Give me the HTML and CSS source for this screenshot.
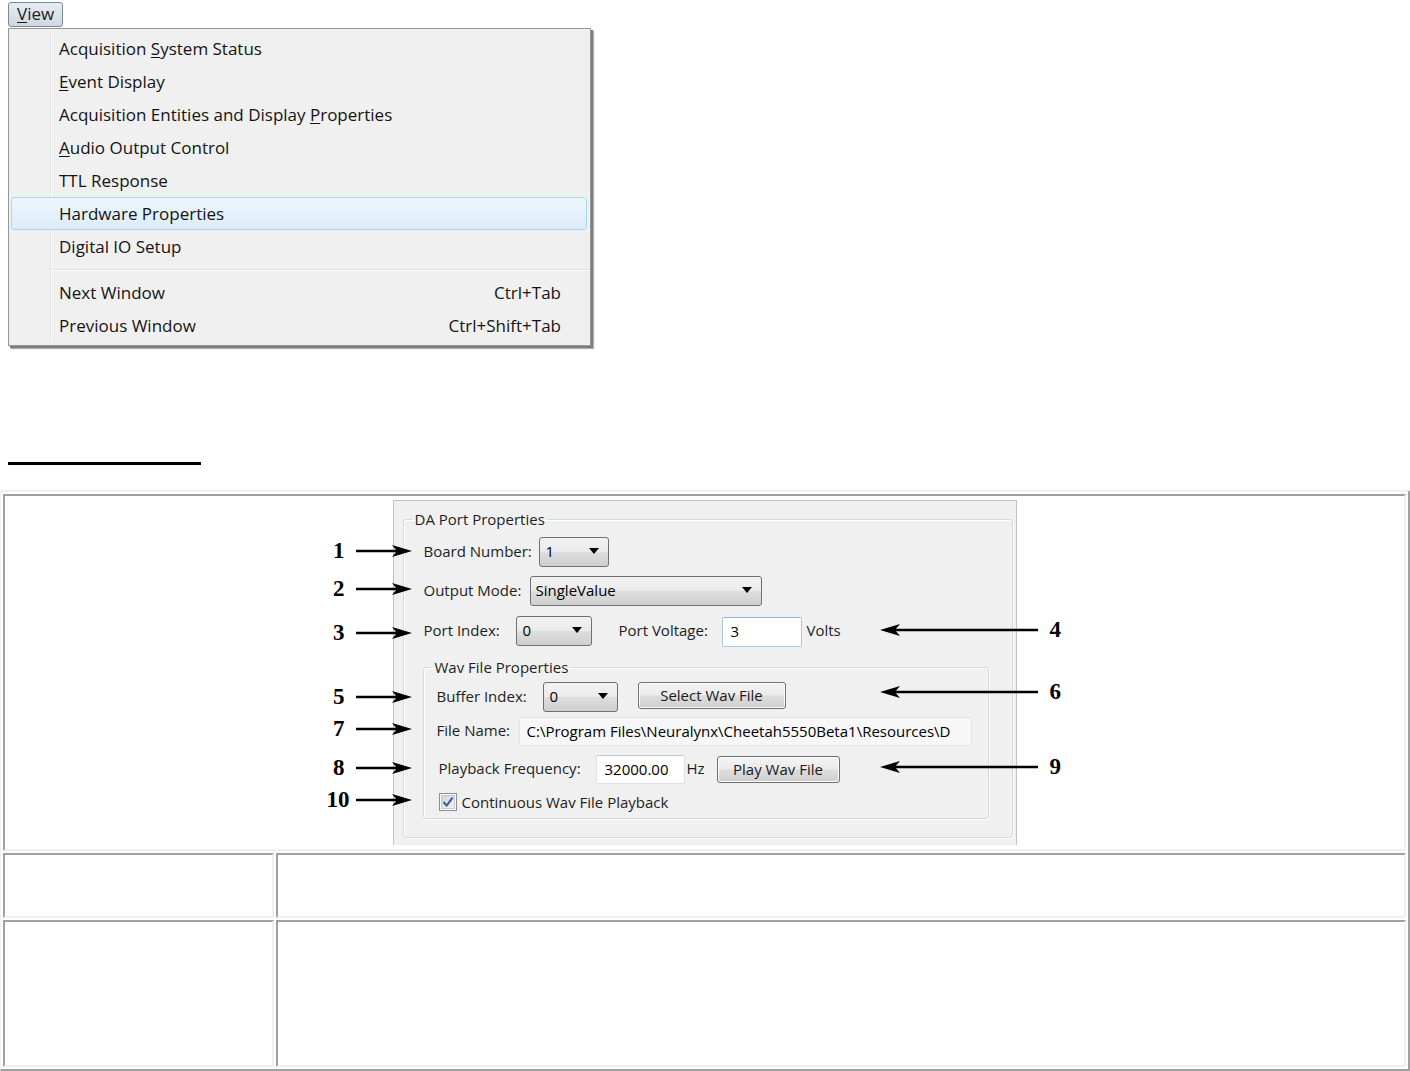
FILE: index.html
```html
<!DOCTYPE html>
<html>
<head>
<meta charset="utf-8">
<title>View menu and DA Port Properties</title>
<link rel="stylesheet" href="styles.css">
</head>
<body>
<div class="menu-area">
  <div class="menubar"><span class="view-btn"><u>V</u>iew</span></div>
  <div class="menu">
    <div class="item"><span>Acquisition <u>S</u>ystem Status</span></div>
    <div class="item"><span><u>E</u>vent Display</span></div>
    <div class="item"><span>Acquisition Entities and Display <u>P</u>roperties</span></div>
    <div class="item"><span><u>A</u>udio Output Control</span></div>
    <div class="item"><span>TTL Response</span></div>
    <div class="item active"><span>Hardware Properties</span></div>
    <div class="item"><span>Digital IO Setup</span></div>
    <div class="sep"></div>
    <div class="item"><span>Next Window</span><span class="key">Ctrl+Tab</span></div>
    <div class="item"><span>Previous Window</span><span class="key">Ctrl+Shift+Tab</span></div>
  </div>
</div>

<div class="rule"></div>

<table class="doc">
  <colgroup>
    <col class="col-a">
    <col class="col-b">
  </colgroup>
  <tr>
    <td class="fig-cell" colspan="2">
      <div class="dialog">
        <fieldset class="group da">
          <legend>DA Port Properties</legend>
          <div class="row r1">
            <span class="lbl w-board">Board Number:</span>
            <span class="combo cb-board">1</span>
          </div>
          <div class="row r2">
            <span class="lbl w-mode">Output Mode:</span>
            <span class="combo cb-mode">SingleValue</span>
          </div>
          <div class="row r3">
            <span class="lbl w-port">Port Index:</span>
            <span class="combo cb-port">0</span>
            <span class="lbl w-volt">Port Voltage:</span>
            <span class="text tb-volt">3</span>
            <span class="lbl unit-volts">Volts</span>
          </div>
          <fieldset class="group wav">
            <legend>Wav File Properties</legend>
            <div class="row w1">
              <span class="lbl w-buf">Buffer Index:</span>
              <span class="combo cb-buf">0</span>
              <span class="btn btn-select">Select Wav File</span>
            </div>
            <div class="row w2">
              <span class="lbl w-file">File Name:</span>
              <span class="text tb-file">C:\Program Files\Neuralynx\Cheetah5550Beta1\Resources\D</span>
            </div>
            <div class="row w3">
              <span class="lbl w-freq">Playback Frequency:</span>
              <span class="text tb-freq">32000.00</span>
              <span class="lbl unit-hz">Hz</span>
              <span class="btn btn-play">Play Wav File</span>
            </div>
            <div class="row w4">
              <svg class="check" width="18" height="18" viewBox="0 0 18 18">
                <defs>
                  <linearGradient id="cbg" x1="0" y1="0" x2="1" y2="1">
                    <stop offset="0" stop-color="#cbd3de"/>
                    <stop offset="1" stop-color="#f4f6f9"/>
                  </linearGradient>
                </defs>
                <rect x="0.5" y="0.5" width="17" height="17" fill="#fff" stroke="#8e8f8f"/>
                <rect x="2.5" y="2.5" width="13" height="13" fill="url(#cbg)" stroke="#c4cad3"/>
                <path d="M4.5 9 L7.6 12.6 L13.6 4.6" fill="none" stroke="#4a5d96" stroke-width="2.2" stroke-linejoin="round"/>
              </svg>
              <span class="lbl">Continuous Wav File Playback</span>
            </div>
          </fieldset>
        </fieldset>

        <div class="callout left c1"><span class="num">1</span><svg width="56" height="14" viewBox="0 0 56 14"><line x1="0" y1="7" x2="44" y2="7" stroke="#000" stroke-width="2.4"/><polygon points="56,7 36,1 41,7 36,13" fill="#000"/></svg></div>
        <div class="callout left c2"><span class="num">2</span><svg width="56" height="14" viewBox="0 0 56 14"><line x1="0" y1="7" x2="44" y2="7" stroke="#000" stroke-width="2.4"/><polygon points="56,7 36,1 41,7 36,13" fill="#000"/></svg></div>
        <div class="callout left c3"><span class="num">3</span><svg width="56" height="14" viewBox="0 0 56 14"><line x1="0" y1="7" x2="44" y2="7" stroke="#000" stroke-width="2.4"/><polygon points="56,7 36,1 41,7 36,13" fill="#000"/></svg></div>
        <div class="callout left c5"><span class="num">5</span><svg width="56" height="14" viewBox="0 0 56 14"><line x1="0" y1="7" x2="44" y2="7" stroke="#000" stroke-width="2.4"/><polygon points="56,7 36,1 41,7 36,13" fill="#000"/></svg></div>
        <div class="callout left c7"><span class="num">7</span><svg width="56" height="14" viewBox="0 0 56 14"><line x1="0" y1="7" x2="44" y2="7" stroke="#000" stroke-width="2.4"/><polygon points="56,7 36,1 41,7 36,13" fill="#000"/></svg></div>
        <div class="callout left c8"><span class="num">8</span><svg width="56" height="14" viewBox="0 0 56 14"><line x1="0" y1="7" x2="44" y2="7" stroke="#000" stroke-width="2.4"/><polygon points="56,7 36,1 41,7 36,13" fill="#000"/></svg></div>
        <div class="callout left c10"><span class="num">10</span><svg width="56" height="14" viewBox="0 0 56 14"><line x1="0" y1="7" x2="44" y2="7" stroke="#000" stroke-width="2.4"/><polygon points="56,7 36,1 41,7 36,13" fill="#000"/></svg></div>

        <div class="callout right c4"><svg width="158" height="14" viewBox="0 0 158 14"><polygon points="0,7 20,1 15,7 20,13" fill="#000"/><line x1="12" y1="7" x2="158" y2="7" stroke="#000" stroke-width="2.4"/></svg><span class="num">4</span></div>
        <div class="callout right c6"><svg width="158" height="14" viewBox="0 0 158 14"><polygon points="0,7 20,1 15,7 20,13" fill="#000"/><line x1="12" y1="7" x2="158" y2="7" stroke="#000" stroke-width="2.4"/></svg><span class="num">6</span></div>
        <div class="callout right c9"><svg width="158" height="14" viewBox="0 0 158 14"><polygon points="0,7 20,1 15,7 20,13" fill="#000"/><line x1="12" y1="7" x2="158" y2="7" stroke="#000" stroke-width="2.4"/></svg><span class="num">9</span></div>
      </div>
    </td>
  </tr>
  <tr>
    <td><div class="blank short"></div></td>
    <td><div class="blank short"></div></td>
  </tr>
  <tr>
    <td><div class="blank tall"></div></td>
    <td><div class="blank tall"></div></td>
  </tr>
</table>
</body>
</html>
```

FILE: styles.css
```css
html, body {
  margin: 0;
  padding: 0;
  background: #ffffff;
}

body {
  font-family: "Open Sans", "Noto Sans", sans-serif;
  color: #000;
  width: 1410px;
  overflow: hidden;
}

/* ---------- Menu ---------- */
.menu-area {
  padding: 2px 0 0 8px;
}

.menubar {
  height: 26px;
}

.view-btn {
  display: inline-block;
  box-sizing: border-box;
  width: 55px;
  height: 25px;
  padding-left: 8px;
  border: 1px solid #7b8898;
  border-radius: 3px;
  background: linear-gradient(#e8edf3, #cfd7e1);
  font-size: 17px;
  line-height: 22px;
  color: #1b1b1b;
}

.view-btn u {
  text-decoration-thickness: 1px;
  text-underline-offset: 2px;
}

.menu {
  box-sizing: border-box;
  width: 583px;
  height: 318px;
  padding: 3px 3px 3px 2px;
  border: 1px solid #979797;
  background:
    linear-gradient(to right, transparent 41px, #e2e3e3 41px, #e2e3e3 42px, #ffffff 42px, #ffffff 43px, transparent 43px) no-repeat 0 2px / 100% calc(100% - 4px),
    #f0f0f0;
  box-shadow: 2px 2px 0 #7c7c7c, 3px 3px 1px #b4b4b4;
}

.item {
  box-sizing: border-box;
  height: 33px;
  display: flex;
  align-items: center;
  justify-content: space-between;
  padding: 0 25px 0 47px;
  border: 1px solid transparent;
  border-radius: 3px;
  font-size: 17px;
  color: #141414;
  white-space: nowrap;
}

.item u {
  text-decoration-thickness: 1px;
  text-underline-offset: 2px;
}

.item.active {
  border-color: #a9d6ee;
  background: linear-gradient(#eef6fc, #dbecf8);
}

.sep {
  height: 6px;
  margin: 0 -3px 6px 40px;
  border-bottom: 1px solid #e0e0e0;
  box-shadow: 0 1px 0 #ffffff;
}

/* ---------- Black rule ---------- */
.rule {
  width: 193px;
  height: 3px;
  margin: 116px 0 0 8px;
  background: #000;
}

/* ---------- Table ---------- */
.doc {
  box-sizing: border-box;
  width: 1410px;
  margin-top: 25px;
  table-layout: fixed;
  border-collapse: separate;
  border-spacing: 2px;
  border-style: solid;
  border-width: 2px 2px 2px 1px;
  border-color: #f0f0f0 #a0a0a0 #a0a0a0 #f0f0f0;
}

.col-a {
  width: 271px;
}

.doc td {
  padding: 0;
  border-style: solid;
  border-width: 2px;
  border-color: #a0a0a0 #f0f0f0 #f0f0f0 #a0a0a0;
  vertical-align: top;
}

.doc td.fig-cell {
  padding: 4px 0;
}

.blank.short {
  height: 61px;
}

.blank.tall {
  height: 143px;
}

/* ---------- Dialog ---------- */
.dialog {
  position: relative;
  box-sizing: border-box;
  width: 624px;
  height: 345px;
  margin: 0 auto;
  border: 1px solid #c3c3c3;
  border-bottom: none;
  background: #f0f0f0;
  font-size: 15px;
  color: #1e1e1e;
}

.group {
  margin: 0;
  padding: 0;
  border: 1px solid #d5d9dd;
  border-radius: 3px;
  box-shadow: inset 1px 1px 0 #ffffff, 1px 1px 0 #ffffff;
  min-inline-size: 0;
}

.group legend {
  padding: 0 3px 1px;
  margin-left: 8px;
  font-size: 15px;
  line-height: 18px;
  color: #1e1e1e;
}

.group.da {
  width: 610px;
  box-sizing: border-box;
  margin: 9px 0 0 9px;
}

.group.wav {
  width: 566px;
  box-sizing: border-box;
  margin: 12px 0 18px 19px;
  padding-bottom: 7px;
}

.row {
  display: flex;
  align-items: center;
  height: 30px;
  padding-left: 20px;
  white-space: nowrap;
}

.r1 { margin-top: 8px; }
.r2 { margin-top: 9px; }
.r3 { margin-top: 10px; }

.wav .row { padding-left: 13px; }
.w1 { margin-top: 5px; }
.w2 { margin-top: 5px; height: 29px; }
.w3 { margin-top: 9px; height: 29px; }
.wav .w3 { padding-left: 15px; }
.w4 { margin-top: 9px; height: 18px; }
.wav .w4 { padding-left: 15px; }

.lbl {
  display: inline-block;
  flex: none;
  padding-bottom: 3px;
}

.w4 .lbl { padding-bottom: 1px; }

.w-board { width: 115px; }
.w-mode  { width: 106px; }
.w-port  { width: 92px; }
.w-volt  { width: 103px; margin-left: 27px; }
.unit-volts { margin-left: 5px; }
.w-buf   { width: 106px; }
.w-file  { width: 82px; }
.w-freq  { width: 157px; }
.unit-hz { width: 32px; margin-left: 2px; }

.check { flex: none; margin-right: 5px; }

/* combo box */
.combo {
  box-sizing: border-box;
  display: flex;
  align-items: center;
  flex: none;
  height: 30px;
  padding: 0 0 2px 6px;
  border: 1px solid #707070;
  border-radius: 3px;
  background: linear-gradient(#f3f3f3 0%, #ebebeb 48%, #dddddd 52%, #cfcfcf 100%);
  color: #000;
}

.combo::after {
  content: "";
  margin-left: auto;
  margin-right: 9px;
  border-left: 5px solid transparent;
  border-right: 5px solid transparent;
  border-top: 6px solid #000;
}

.cb-board { width: 70px; }
.cb-mode  { width: 232px; padding-left: 5px; }
.cb-port  { width: 76px; }
.cb-buf   { width: 75px; }

/* text box */
.text {
  box-sizing: border-box;
  display: flex;
  align-items: center;
  flex: none;
  height: 30px;
  padding: 0 0 2px 8px;
  border: 1px solid #dde1e7;
  border-top-color: #c5cad2;
  border-radius: 2px;
  background: #ffffff;
  overflow: hidden;
  white-space: nowrap;
  color: #000;
}

.tb-volt {
  width: 80px;
  margin-top: 2px;
  border-color: #a9c8e6;
  border-top-color: #8fb6dc;
}

.tb-file {
  width: 453px;
  height: 29px;
  padding-left: 7px;
  background: #f7f7f7;
  border-color: #e2e4e7;
}

.tb-freq {
  width: 89px;
  height: 29px;
}

/* push button */
.btn {
  box-sizing: border-box;
  display: flex;
  align-items: center;
  justify-content: center;
  flex: none;
  height: 27px;
  padding-bottom: 2px;
  border: 1px solid #707070;
  border-radius: 3px;
  background: linear-gradient(#f3f3f3 0%, #ebebeb 48%, #dddddd 52%, #cfcfcf 100%);
  box-shadow: inset 0 0 0 1px #fbfbfb;
  color: #1a1a1a;
}

.btn-select {
  width: 148px;
  margin-left: 20px;
  align-self: flex-start;
}

.btn-play {
  width: 123px;
  margin-left: -2px;
}

/* ---------- Callouts ---------- */
.callout {
  position: absolute;
  display: flex;
  align-items: center;
  height: 24px;
}

.callout .num {
  font-family: "Liberation Serif", "Times New Roman", serif;
  font-weight: bold;
  font-size: 23px;
  line-height: 24px;
  color: #000;
}

.callout.left {
  left: -72px;
}

.callout.left .num {
  width: 28px;
  margin-right: 6px;
  text-align: right;
  padding-right: 5px;
  box-sizing: border-box;
}

.callout.left.c10 .num {
  padding-right: 0;
}

.callout.right {
  left: 486px;
}

.callout.right .num {
  margin-left: 12px;
}

.c1  { top: 38px; }
.c2  { top: 76px; }
.c3  { top: 120px; }
.c5  { top: 184px; }
.c7  { top: 216px; }
.c8  { top: 255px; }
.c10 { top: 287px; }
.c4  { top: 117px; }
.c6  { top: 179px; }
.c9  { top: 254px; }
```
